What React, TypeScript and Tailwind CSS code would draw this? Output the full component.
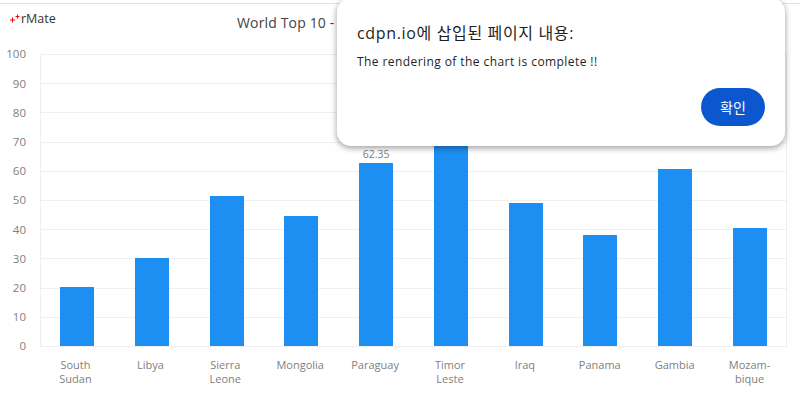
const yTicks = [100, 90, 80, 70, 60, 50, 40, 30, 20, 10, 0]

const items = [
  { name: ['South', 'Sudan'], value: 20.2 },
  { name: ['Libya'], value: 30.1 },
  { name: ['Sierra', 'Leone'], value: 51.3 },
  { name: ['Mongolia'], value: 44.4 },
  { name: ['Paraguay'], value: 62.35, label: true },
  { name: ['Timor', 'Leste'], value: 68.5 },
  { name: ['Iraq'], value: 48.8 },
  { name: ['Panama'], value: 37.8 },
  { name: ['Gambia'], value: 60.5 },
  { name: ['Mozam-', 'bique'], value: 40.4 },
]

function Chart() {
  return (
    <div className="flex">
      <div className="w-[40px] h-[292px] flex flex-col justify-between items-end pr-[14px] text-[11.5px] text-[#808080]">
        {yTicks.map((t) => (
          <div key={t} className="h-0 flex items-center">{t}</div>
        ))}
      </div>
      <div className="w-[747px]">
        <div className="grid h-[293px]">
          <div className="col-start-1 row-start-1 flex flex-col border-x border-b border-[#eeeeee]">
            {yTicks.slice(1).map((t) => (
              <div key={t} className="h-[29.2px] border-t border-[#f0f0f0]" />
            ))}
          </div>
          <div className="col-start-1 row-start-1 flex items-end pb-px">
            {items.map((item) => (
              <div key={item.name[0]} className="flex-1 flex flex-col items-center">
                {item.label && <div className="mb-[2px] text-[10.5px] leading-[13px] text-[#808080]">{item.value}</div>}
                <div className="w-[34px] bg-[#1e8ff2]" style={{ height: Math.round(item.value * 2.93) }} />
              </div>
            ))}
          </div>
        </div>
        <div className="flex -ml-[2px] pt-[11px] text-[11px] leading-[14px] text-[#808080]">
          {items.map((item) => (
            <div key={item.name[0]} className="flex-1 text-center">
              {item.name.map((line) => (
                <div key={line}>{line}</div>
              ))}
            </div>
          ))}
        </div>
      </div>
    </div>
  )
}

function Pluses() {
  return (
    <svg width="10" height="9" viewBox="0 0 10 9" className="mt-[3px]">
      <path d="M0 6h5M2.5 3.5v5" stroke="#f00" strokeWidth="1" fill="none" />
      <path d="M5.5 2.5h4M7.5 0.5v4" stroke="#f00" strokeWidth="1" fill="none" />
    </svg>
  )
}

export default function App() {
  return (
    <div className="relative w-[800px] h-[400px] overflow-hidden bg-white font-['Open_Sans','Noto_Sans_CJK_KR',sans-serif]">
      <div className="h-[4px] border-b border-[#e0e0e0]" />
      <div className="flex h-[50px]">
        <div className="w-[237px] pl-[10px] pt-[7px] flex items-start text-[12.5px] leading-[16px] text-[#333]">
          <Pluses />
          <span className="ml-[1px]">rMate</span>
        </div>
        <div className="pt-[9px] text-[14px] leading-[20px] tracking-[0.15px] text-[#444]">World Top 10 -</div>
      </div>
      <Chart />
      <div className="absolute left-[337px] top-[-2px] w-[448px] h-[148px] rounded-[14px] bg-white shadow-[0_2px_6px_rgba(0,0,0,0.4)] px-[20px] pt-[23px]">
        <div className="text-[16px] leading-[24px] tracking-[0.65px] text-[#1f1f1f]">cdpn.io에 삽입된 페이지 내용:</div>
        <div className="mt-[9px] text-[12px] leading-[16px] tracking-[0.42px] text-[#1f1f1f]">The rendering of the chart is complete !!</div>
        <div className="flex justify-end mt-[18px]">
          <button className="w-[64px] h-[38px] rounded-full bg-[#0b57d0] text-[14px] text-white">확인</button>
        </div>
      </div>
    </div>
  )
}
